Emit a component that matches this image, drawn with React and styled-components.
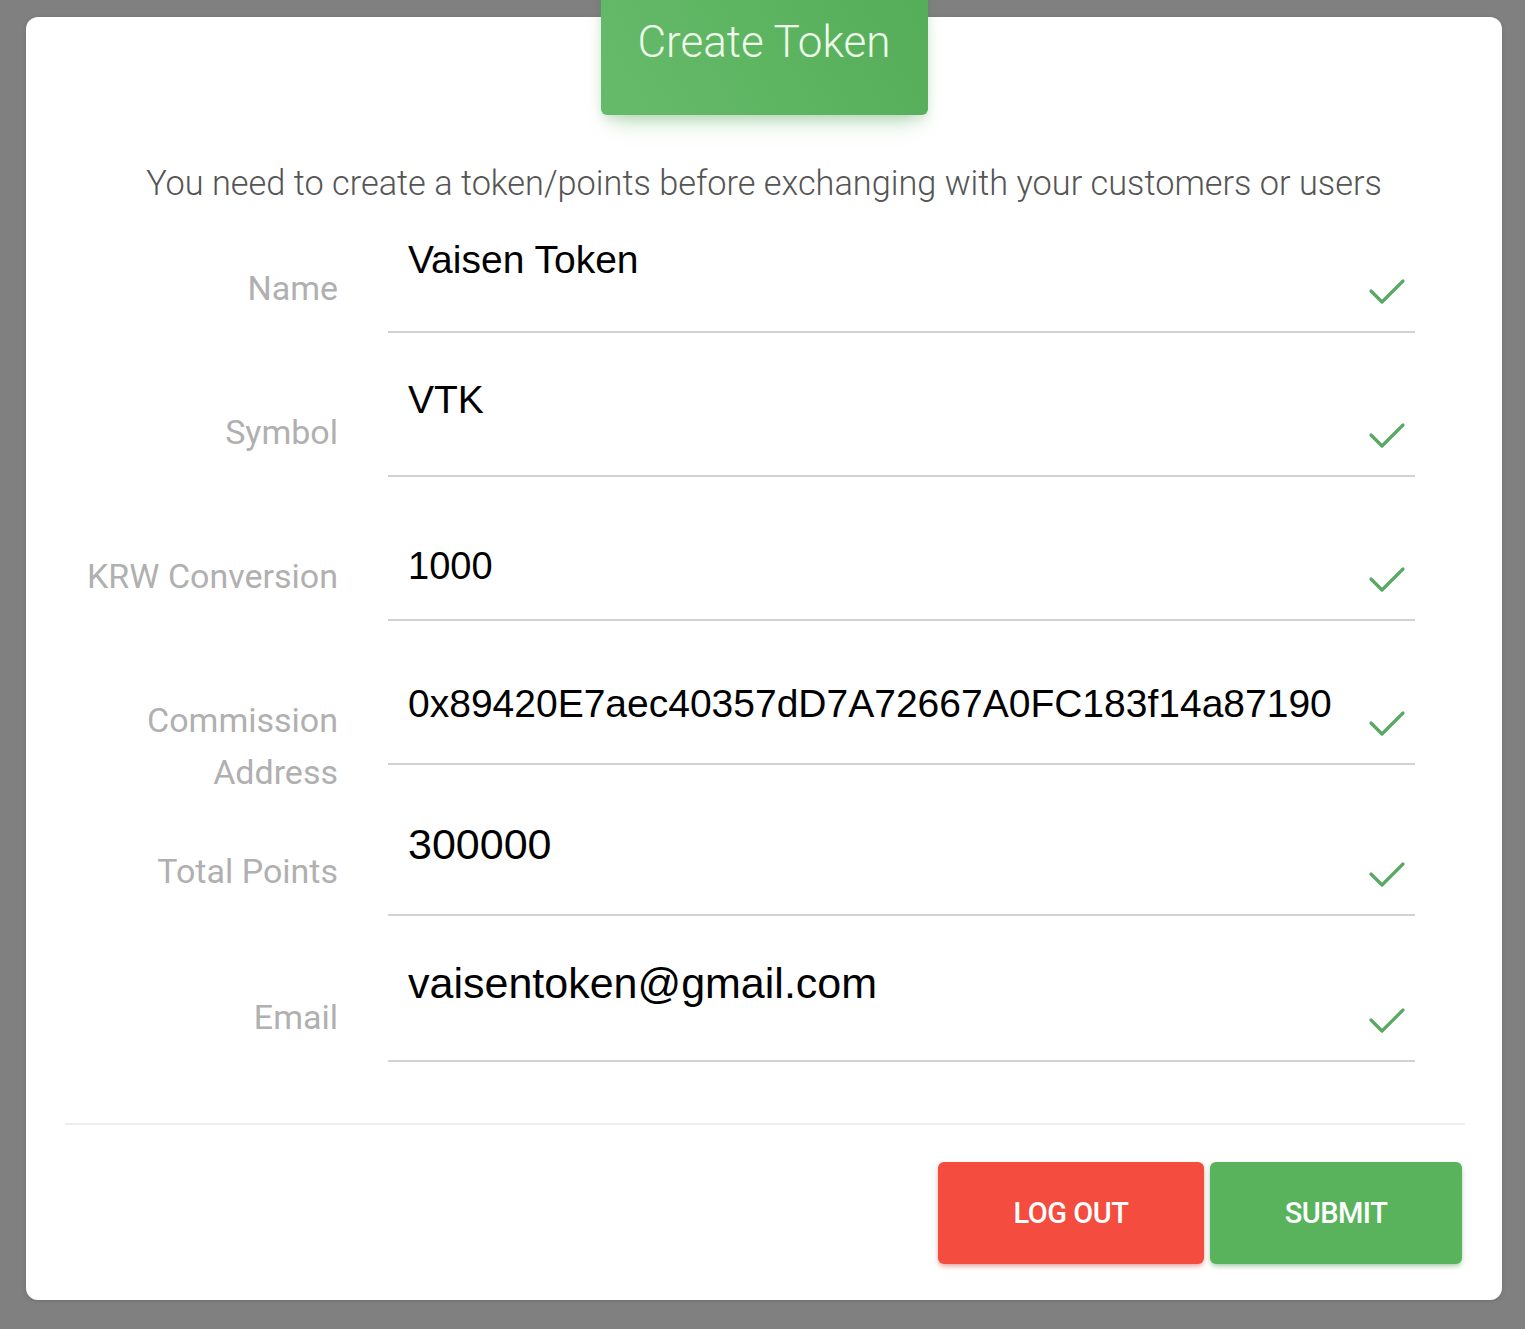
import React from "react";
import styled, { createGlobalStyle } from "styled-components";

const Global = createGlobalStyle`
  html, body { margin: 0; padding: 0; }
  body {
    background: #808080;
    font-family: Roboto, "Liberation Sans", sans-serif;
    width: 1525px;
    height: 1329px;
    overflow: hidden;
  }
`;

const Page = styled.div`
  padding: 17px 23px 0 26px;
`;

const Card = styled.div`
  width: 1476px;
  height: 1283px;
  background: #ffffff;
  border-radius: 12px;
  box-sizing: border-box;
  display: flex;
  flex-direction: column;
  align-items: center;
  box-shadow: 0 1px 4px rgba(0, 0, 0, 0.14);
`;

const HeaderTab = styled.div`
  margin-top: -30px;
  width: 327px;
  height: 128px;
  box-sizing: border-box;
  padding-top: 30px;
  border-radius: 0 0 6px 6px;
  background: linear-gradient(60deg, #66bb6a, #54ad58);
  box-shadow: 0 14px 22px -10px rgba(76, 175, 80, 0.45),
    0 4px 10px rgba(0, 0, 0, 0.08);
  color: #eefbea;
  font-family: Roboto, sans-serif;
  font-weight: 300;
  font-size: 44px;
  line-height: 50px;
  text-align: center;
`;

const Subtitle = styled.p`
  margin: 48px 0 0;
  font-family: Roboto, sans-serif;
  font-weight: 300;
  font-size: 34.3px;
  line-height: 40px;
  color: #555555;
  text-align: center;
  white-space: nowrap;
`;

const Form = styled.div`
  align-self: stretch;
  display: flex;
  flex-direction: column;
  padding-right: 87px;
`;

const Row = styled.div`
  display: grid;
  grid-template-columns: 312px 1fr;
  column-gap: 50px;
  height: ${(p) => p.$h}px;
`;

const Label = styled.div`
  align-self: end;
  height: 71px;
  text-align: right;
  font-family: Roboto, sans-serif;
  font-weight: 400;
  font-size: 34px;
  line-height: 52px;
  color: #b0b0b0;
  white-space: nowrap;
`;

const Field = styled.div`
  position: relative;
  border-bottom: 2px solid #d2d2d2;
  box-sizing: border-box;
  height: 100%;
  padding-top: ${(p) => p.$top}px;
  padding-left: 20px;
`;

const Value = styled.div`
  font-family: "Liberation Sans", Arial, sans-serif;
  font-size: ${(p) => p.$size}px;
  line-height: normal;
  color: #000000;
  white-space: nowrap;
`;

const CheckMark = styled.svg`
  position: absolute;
  right: 9px;
  bottom: 24px;
  width: 38px;
  height: 30px;
`;

const Divider = styled.div`
  align-self: stretch;
  margin: 61px 37px 0 39px;
  height: 2px;
  background: #eeeeee;
`;

const Actions = styled.div`
  align-self: stretch;
  display: flex;
  justify-content: flex-end;
  gap: 6px;
  padding: 37px 40px 0 0;
`;

const Button = styled.button`
  width: ${(p) => p.$w}px;
  height: 102px;
  border: none;
  border-radius: 6px;
  background: ${(p) => p.$bg};
  box-shadow: 0 3px 6px -2px ${(p) => p.$glow},
    0 2px 4px rgba(0, 0, 0, 0.12);
  color: #ffffff;
  font-family: Roboto, sans-serif;
  font-weight: 500;
  font-size: 29px;
  letter-spacing: -0.5px;
  text-transform: uppercase;
  padding: 0;
`;

const Check = () => (
  <CheckMark viewBox="0 0 38 30">
    <polyline
      points="3,14 14,25 35,4"
      fill="none"
      stroke="#58a964"
      strokeWidth="3.2"
      strokeLinecap="round"
      strokeLinejoin="round"
    />
  </CheckMark>
);

const rows = [
  { label: "Name", value: "Vaisen Token", h: 130, top: 35, size: 39 },
  { label: "Symbol", value: "VTK", h: 144, top: 45, size: 39 },
  { label: "KRW Conversion", value: "1000", h: 144, top: 68, size: 38 },
  {
    label: (
      <>
        Commission
        <br />
        Address
      </>
    ),
    value: "0x89420E7aec40357dD7A72667A0FC183f14a87190",
    h: 144,
    top: 61,
    size: 39,
  },
  { label: "Total Points", value: "300000", h: 151, top: 55, size: 43 },
  { label: "Email", value: "vaisentoken@gmail.com", h: 146, top: 43, size: 43 },
];

export default function App() {
  return (
    <>
      <Global />
      <Page>
        <Card>
          <HeaderTab>Create Token</HeaderTab>
          <Subtitle>
            You need to create a token/points before exchanging with your
            customers or users
          </Subtitle>
          <Form>
            {rows.map((r, i) => (
              <Row key={i} $h={r.h}>
                <Label>{r.label}</Label>
                <Field $top={r.top}>
                  <Value $size={r.size}>{r.value}</Value>
                  <Check />
                </Field>
              </Row>
            ))}
          </Form>
          <Divider />
          <Actions>
            <Button $w={266} $bg="#f44c3e" $glow="rgba(244,67,54,0.5)">
              Log out
            </Button>
            <Button $w={252} $bg="#58b35c" $glow="rgba(76,175,80,0.5)">
              Submit
            </Button>
          </Actions>
        </Card>
      </Page>
    </>
  );
}
